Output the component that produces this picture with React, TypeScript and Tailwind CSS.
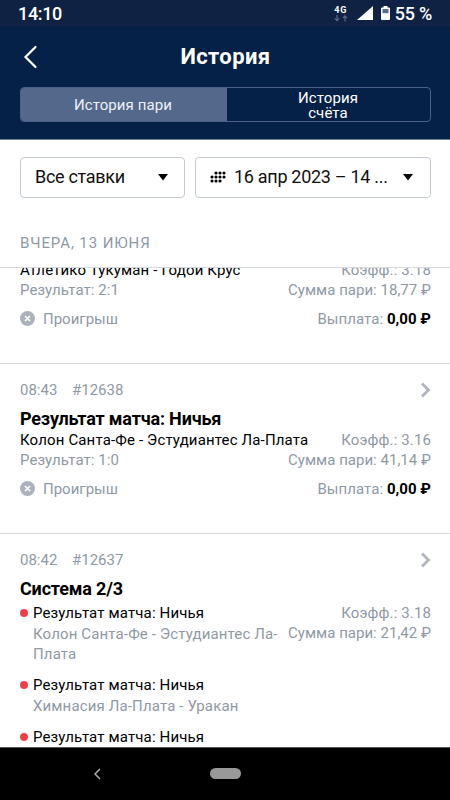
import React from 'react';

interface Leg {
  title: string;
  match: string;
}

interface Bet {
  id: string;
  time: string;
  title: string;
  match?: string;
  result?: string;
  coefficient: string;
  amount: string;
  payout?: string;
  legs?: Leg[];
}

const bets: Bet[] = [
  {
    id: '#12639',
    time: '08:44',
    title: 'Результат матча: Ничья',
    match: 'Атлетико Тукуман - Годой Крус',
    result: '2:1',
    coefficient: '3.18',
    amount: '18,77 ₽',
    payout: '0,00 ₽',
  },
  {
    id: '#12638',
    time: '08:43',
    title: 'Результат матча: Ничья',
    match: 'Колон Санта-Фе - Эстудиантес Ла-Плата',
    result: '1:0',
    coefficient: '3.16',
    amount: '41,14 ₽',
    payout: '0,00 ₽',
  },
  {
    id: '#12637',
    time: '08:42',
    title: 'Система 2/3',
    coefficient: '3.18',
    amount: '21,42 ₽',
    legs: [
      { title: 'Результат матча: Ничья', match: 'Колон Санта-Фе - Эстудиантес Ла-Плата' },
      { title: 'Результат матча: Ничья', match: 'Химнасия Ла-Плата - Уракан' },
      { title: 'Результат матча: Ничья', match: '' },
    ],
  },
];

function StatusBar() {
  return (
    <div className="flex h-[27px] shrink-0 items-center justify-between bg-[#102243] px-[18px] text-[18px] font-medium leading-[27px] tracking-[-0.35px] text-white">
      <span>14:10</span>
      <div className="flex items-center">
        <div className="mr-[9px] flex w-[14px] flex-col items-center">
          <span className="text-[9px] font-bold leading-[9px] tracking-[0.8px]">4G</span>
          <svg width="14" height="7" viewBox="0 0 14 7" fill="none" stroke="#5b6885" strokeWidth="1.2">
            <path d="M3 0v5.6M0.8 3.4L3 5.6l2.2-2.2M11 6.5V0.9M8.8 3.1L11 0.9l2.2 2.2" />
          </svg>
        </div>
        <svg className="mr-[8px] -mt-px" width="16" height="14" viewBox="0 0 16 14" fill="#fff">
          <path d="M16 0v14H0z" />
        </svg>
        <svg className="mr-[5px] -mt-px" width="9" height="14" viewBox="0 0 9 14">
          <path d="M2.5 0h4v1.4H8a1 1 0 0 1 1 1V13a1 1 0 0 1-1 1H1a1 1 0 0 1-1-1V2.4a1 1 0 0 1 1-1h1.5z" fill="#fff" />
          <path d="M1.5 3h6v4.2h-6z" fill="#5f6c87" />
        </svg>
        <span className="tracking-[-0.25px]">55 %</span>
      </div>
    </div>
  );
}

function Header() {
  return (
    <div className="h-[113px] shrink-0 border-b border-[#70809b] bg-[#062147] px-5 text-white">
      <div className="flex h-[60px] items-center">
        <svg className="-mt-px ml-[3px]" width="16" height="24" viewBox="0 0 16 24" fill="none" stroke="#fff" strokeWidth="2.2" strokeLinecap="round">
          <path d="M12.5 2L2.5 12l10 10" />
        </svg>
        <h1 className="flex-1 pr-[18px] text-center text-[22px] font-bold leading-[26px] tracking-[0.4px]">История</h1>
      </div>
      <div className="mr-[-1px] flex h-[35px] overflow-hidden rounded border border-[#4d6187] text-center text-[15px] tracking-[0.1px]">
        <div className="flex w-[206px] items-center justify-center bg-[#54688b] pr-[2px] pt-px text-[#eef1f6]">История пари</div>
        <div className="flex flex-1 items-center justify-center pl-[60px] pr-[61px] pt-[2px] leading-[15px]">История счёта</div>
      </div>
    </div>
  );
}

function Caret() {
  return (
    <svg className="mt-[2px]" width="10" height="7" viewBox="0 0 10 7" fill="#000">
      <path d="M0 0h10L5 6.5z" />
    </svg>
  );
}

function CalendarDots() {
  const dots = [
    [6, 2], [10, 2], [14, 2],
    [2, 6], [6, 6], [10, 6], [14, 6],
    [2, 10], [6, 10], [10, 10],
  ];
  return (
    <svg className="mt-px" width="16" height="12" viewBox="0 0 16 12" fill="#000">
      {dots.map(([x, y]) => (
        <circle key={`${x}-${y}`} cx={x} cy={y} r="1.55" />
      ))}
    </svg>
  );
}

function Filters() {
  return (
    <div className="flex shrink-0 gap-[10px] pl-5 pr-[19px] pt-[17px] text-[18px] tracking-[-0.3px] text-[#111]">
      <button className="flex h-[41px] w-[165px] items-center justify-between rounded border border-[#c3cad3] pb-[2px] pl-[14px] pr-4">
        Все ставки
        <Caret />
      </button>
      <button className="flex h-[41px] flex-1 items-center rounded border border-[#c3cad3] pb-[2px] pl-[14px] pr-[17px]">
        <CalendarDots />
        <span className="ml-2 flex-1 text-left">16 апр 2023 – 14 ...</span>
        <Caret />
      </button>
    </div>
  );
}

function BetCard({ bet }: { bet: Bet }) {
  return (
    <div className="h-[170px] border-t border-[#d5d9e0] pl-5 pr-[19px] pt-4 text-[15px] leading-5 text-[#8f99a5]">
      <div className="flex items-center">
        <span className="w-[52px]">{bet.time}</span>
        <span className="flex-1">{bet.id}</span>
        <svg width="10" height="16" viewBox="0 0 10 16" fill="none" stroke="#b0b6c0" strokeWidth="2.8">
          <path d="M1 1.5L7.5 8L1 14.5" />
        </svg>
      </div>
      <h2 className="mt-[7px] text-[18px] font-bold leading-[23px] tracking-[-0.17px] text-black">{bet.title}</h2>
      <div className="flex justify-between">
        {bet.legs ? (
          <ul className="w-[262px] pt-[3px] tracking-[0.14px]">
            {bet.legs.map((leg, index) => (
              <li key={index} className="mb-[11.5px] flex">
                <span className="mr-[5px] mt-[6px] h-2 w-2 shrink-0 rounded-full bg-[#f33f46]" />
                <div>
                  <div className="h-[20.5px] text-black">{leg.title}</div>
                  <div>{leg.match}</div>
                </div>
              </li>
            ))}
          </ul>
        ) : (
          <div className="whitespace-nowrap">
            <div className="tracking-[0.15px] text-black">{bet.match}</div>
            <div className="tracking-[0.05px]">Результат: {bet.result}</div>
          </div>
        )}
        <div className={`shrink-0 whitespace-nowrap text-right ${bet.legs ? 'ml-[-10px] pt-[3px]' : 'ml-[-60px]'}`}>
          <div className="tracking-[0.12px]">Коэфф.: {bet.coefficient}</div>
          <div className="tracking-[0.02px]">Сумма пари: {bet.amount}</div>
        </div>
      </div>
      {bet.payout && (
        <div className="mt-[9px] flex items-center">
          <svg className="-mt-[2px]" width="15" height="15" viewBox="0 0 15 15">
            <circle cx="7.5" cy="7.5" r="7.5" fill="#abb2bc" />
            <path d="M5 5l5 5M10 5L5 10" stroke="#fff" strokeWidth="1.7" />
          </svg>
          <span className="ml-2 flex-1">Проигрыш</span>
          <span className="tracking-[0.05px]">
            Выплата: <b className="font-bold text-black">{bet.payout}</b>
          </span>
        </div>
      )}
    </div>
  );
}

function NavigationBar() {
  return (
    <div className="flex h-[53px] shrink-0 items-center border-t border-[#555] bg-black pb-px pl-[93px]">
      <svg width="8" height="12" viewBox="0 0 8 12" fill="none" stroke="#aaa" strokeWidth="1.5">
        <path d="M7 1L2 6l5 5" />
      </svg>
      <div className="ml-[109px] h-[11px] w-[31px] rounded-full bg-[#999]" />
    </div>
  );
}

export default function App() {
  return (
    <div className="flex h-[800px] w-[450px] flex-col overflow-hidden bg-white font-['Roboto',sans-serif]">
      <StatusBar />
      <Header />
      <Filters />
      <div className="flex h-[69px] shrink-0 items-center pl-5 pt-[22px] text-[15px] tracking-[0.9px] text-[#8f99a5]">
        ВЧЕРА, 13 ИЮНЯ
      </div>
      <div className="min-h-0 flex-1 overflow-hidden border-t border-[#d5d9e0]">
        <div className="-mt-[75px]">
          {bets.map((bet) => (
            <BetCard key={bet.id} bet={bet} />
          ))}
        </div>
      </div>
      <NavigationBar />
    </div>
  );
}
